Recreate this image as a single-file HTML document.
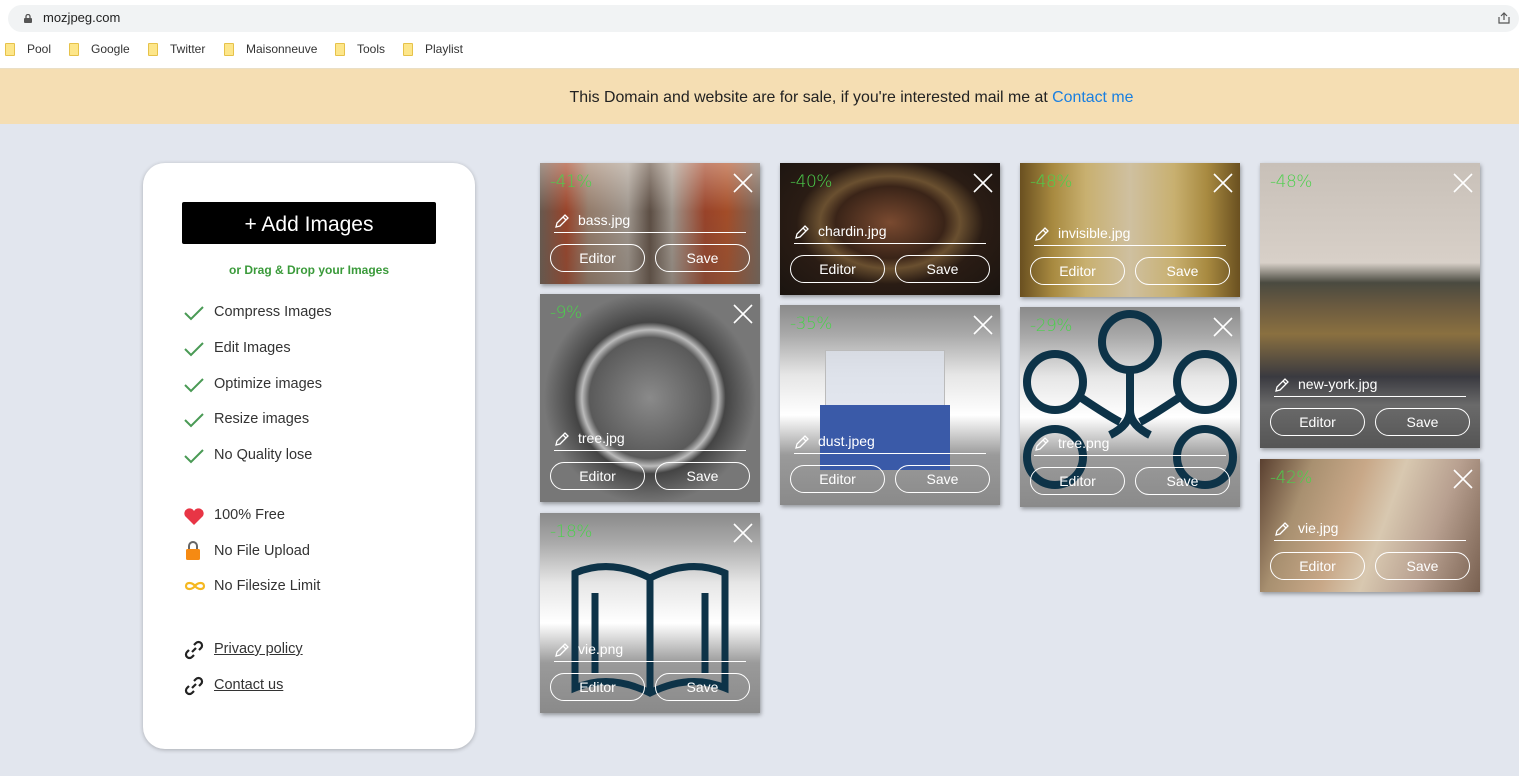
<!DOCTYPE html>
<html><head><meta charset="utf-8"><style>
*{margin:0;padding:0;box-sizing:border-box}
body{width:1519px;height:776px;overflow:hidden;background:#e2e6ee;font-family:"Liberation Sans",sans-serif;position:relative}
.top{position:absolute;left:0;top:0;width:1519px;height:68px;background:#fff}
.url{position:absolute;left:8px;top:5px;width:1511px;height:27px;background:#f1f3f4;border-radius:14px}
.url span{position:absolute;left:35px;top:5px;font-size:13px;color:#222}
.lock{position:absolute;left:16px;top:9px;width:8px;height:9px}
.bm{position:absolute;top:42px;font-size:12px;color:#333}
.bm i{position:absolute;left:-22px;top:1px;width:10px;height:13px;background:#fde68a;border:1px solid #e6c24a;border-radius:1px}
.banner{position:absolute;left:0;top:68px;width:1519px;height:56px;background:#f5deb3;text-align:center;line-height:57px;font-size:15.9px;color:#222;border-top:1px solid #eadfc6;padding-left:184px}
.banner a{color:#1a7fe0;text-decoration:none}
.panel{position:absolute;left:143px;top:163px;width:332px;height:586px;background:#fff;border-radius:22px;box-shadow:0 1px 4px rgba(0,0,0,.25)}
.add{position:absolute;left:39px;top:39px;width:254px;height:42px;background:#000;border-radius:2px;color:#fff;font-size:21px;text-align:center;line-height:45px}
.dd{position:absolute;left:0;width:332px;top:100px;text-align:center;color:#3a9a3a;font-size:12px;font-weight:bold}
.it{position:absolute;left:71px;font-size:14.5px;color:#333}
.ic{position:absolute;left:40px}
.it a{color:#333}
.card{position:absolute;width:220px;overflow:hidden;box-shadow:1px 2px 4px rgba(0,0,0,.35)}
.pct{position:absolute;left:10px;top:9px;color:#4cd04c;font-size:17px;font-family:"DejaVu Sans",sans-serif;font-weight:300;letter-spacing:-0.5px}
.x{position:absolute;right:6px;top:9px;width:22px;height:22px}
.nm{position:absolute;left:14px;right:14px;bottom:51px;height:24px;border-bottom:1px solid #fff;color:#fff;font-size:14px;padding-left:24px;line-height:22px}
.nm svg{position:absolute;left:0;top:4px}
.b{position:absolute;bottom:12px;width:95px;height:28px;border:1px solid #fff;border-radius:14px;color:#fff;font-size:14px;text-align:center;line-height:26px}
.b1{left:10px}.b2{left:115px}
.png{background:linear-gradient(#8a8a8a 0%,#aaa 15%,#e6e6e6 35%,#fff 55%,#dcdcdc 62%,#9a9a9a 75%,#8a8a8a 100%)}
</style></head><body>
<div class="top">
<div class="url"><svg class="lock" viewBox="0 0 8 9"><rect x="0" y="4" width="8" height="5" rx="1" fill="#555"/><path d="M2 4V2.5a2 2 0 0 1 4 0V4" stroke="#555" stroke-width="1.3" fill="none"/></svg><span>mozjpeg.com</span>
<svg style="position:absolute;right:8px;top:6px" width="14" height="14" viewBox="0 0 14 14"><path d="M2 6v6h10V6M7 9V2M4 5l3-3 3 3" stroke="#555" fill="none" stroke-width="1.2"/></svg></div>
<div class="bm" style="left:27px"><i></i>Pool</div>
<div class="bm" style="left:91px"><i></i>Google</div>
<div class="bm" style="left:170px"><i></i>Twitter</div>
<div class="bm" style="left:246px"><i></i>Maisonneuve</div>
<div class="bm" style="left:357px"><i></i>Tools</div>
<div class="bm" style="left:425px"><i></i>Playlist</div>
</div>
<div class="banner">This Domain and website are for sale, if you're interested mail me at <a>Contact me</a></div>

<div class="panel">
<div class="add">+ Add Images</div>
<div class="dd">or Drag &amp; Drop your Images</div>
<svg class="ic" style="top:142px" width="22" height="16" viewBox="0 0 22 16"><path d="M2 8l6 6L20 2" stroke="#4a9a55" stroke-width="2" fill="none"/></svg><div class="it" style="top:141px">Compress Images</div>
<svg class="ic" style="top:178px" width="22" height="16" viewBox="0 0 22 16"><path d="M2 8l6 6L20 2" stroke="#4a9a55" stroke-width="2" fill="none"/></svg><div class="it" style="top:177px">Edit Images</div>
<svg class="ic" style="top:214px" width="22" height="16" viewBox="0 0 22 16"><path d="M2 8l6 6L20 2" stroke="#4a9a55" stroke-width="2" fill="none"/></svg><div class="it" style="top:213px">Optimize images</div>
<svg class="ic" style="top:249px" width="22" height="16" viewBox="0 0 22 16"><path d="M2 8l6 6L20 2" stroke="#4a9a55" stroke-width="2" fill="none"/></svg><div class="it" style="top:248px">Resize images</div>
<svg class="ic" style="top:285px" width="22" height="16" viewBox="0 0 22 16"><path d="M2 8l6 6L20 2" stroke="#4a9a55" stroke-width="2" fill="none"/></svg><div class="it" style="top:284px">No Quality lose</div>
<svg class="ic" style="top:345px" width="22" height="18" viewBox="0 0 22 18"><path d="M11 17L2 8a4.5 4.5 0 0 1 9-5 4.5 4.5 0 0 1 9 5z" fill="#e83545"/></svg><div class="it" style="top:344px">100% Free</div>
<svg class="ic" style="top:377px" width="20" height="21" viewBox="0 0 20 21"><path d="M6 9V6a4 4 0 0 1 8 0v3" stroke="#666" stroke-width="2" fill="none"/><rect x="3" y="9" width="14" height="11" rx="1.5" fill="#f68a12"/></svg><div class="it" style="top:380px">No File Upload</div>
<svg class="ic" style="top:417px" width="24" height="12" viewBox="0 0 24 12"><path d="M12 6c-3-4-9-4-9 0s6 4 9 0 9-4 9 0-6 4-9 0" stroke="#f5b820" stroke-width="2.2" fill="none"/></svg><div class="it" style="top:415px">No Filesize Limit</div>
<svg class="ic" style="top:476px" width="22" height="22" viewBox="0 0 22 22"><g stroke="#222" stroke-width="2.2" fill="none"><path d="M9 13l4-4"/><path d="M11 6l2-2a3 3 0 0 1 5 5l-2 2"/><path d="M11 16l-2 2a3 3 0 0 1-5-5l2-2"/></g></svg><div class="it" style="top:478px"><a style="text-decoration:underline">Privacy policy</a></div>
<svg class="ic" style="top:512px" width="22" height="22" viewBox="0 0 22 22"><g stroke="#222" stroke-width="2.2" fill="none"><path d="M9 13l4-4"/><path d="M11 6l2-2a3 3 0 0 1 5 5l-2 2"/><path d="M11 16l-2 2a3 3 0 0 1-5-5l2-2"/></g></svg><div class="it" style="top:514px"><a style="text-decoration:underline">Contact us</a></div>
</div>

<div class="card" style="left:540px;top:163px;height:121px;background:linear-gradient(90deg,#7a6a60 0%,#c04a2a 12%,#b89a86 22%,#c8c0b8 40%,#6a5a50 50%,#c8c0b8 60%,#c04a2a 75%,#d05828 85%,#8a7a70 100%)"><div style="position:absolute;inset:0;background:linear-gradient(rgba(200,190,180,.5),rgba(60,50,40,.3) 40%,rgba(80,70,60,.5))"></div></div>
<div class="card" style="left:540px;top:294px;height:208px;background:radial-gradient(circle at 50% 50%,#8a8a8a 0%,#5a5a5a 40%,#bbb 45%,#444 50%,#777 70%)"></div>
<div class="card png" style="left:540px;top:513px;height:200px"><svg style="position:absolute;left:25px;top:40px" width="170" height="150" viewBox="0 0 170 150"><g stroke="#0d3348" stroke-width="7" fill="none"><path d="M10 20q35-15 75 5q40-20 75-5v115q-35-15-75 5q-40-20-75-5z"/><path d="M85 25v115M30 40v80M140 40v80"/></g></svg></div>
<div class="card" style="left:780px;top:163px;height:132px;background:radial-gradient(ellipse at 50% 45%,#7a4a30 0%,#3a2418 35%,#6a5030 45%,#2a1c14 60%,#1a1410 100%)"></div>
<div class="card png" style="left:780px;top:305px;height:200px"><div style="position:absolute;left:45px;top:45px;width:120px;height:60px;background:rgba(220,225,235,.8);border:1px solid #bbb"></div><div style="position:absolute;left:40px;top:100px;width:130px;height:65px;background:#3a5aa8"></div></div>
<div class="card" style="left:1020px;top:163px;height:134px;background:linear-gradient(90deg,#6a5020,#a88a40 15%,#c8b070 30%,#cfc0a0 50%,#c8b070 70%,#a88a40 85%,#6a5020)"></div>
<div class="card png" style="left:1020px;top:307px;height:200px"><svg style="position:absolute;left:0;top:0" width="220" height="200" viewBox="0 0 220 200"><g stroke="#0d3348" stroke-width="8" fill="none"><circle cx="110" cy="35" r="28"/><circle cx="35" cy="75" r="28"/><circle cx="185" cy="75" r="28"/><circle cx="35" cy="150" r="28"/><circle cx="185" cy="150" r="28"/><path d="M110 63v40q0 15-20 25M110 103q0 15 20 25M60 90q30 20 40 25M160 90q-30 20-40 25"/></g></svg></div>
<div class="card" style="left:1260px;top:163px;height:285px;background:linear-gradient(#c8c0b8 0%,#d8d0c8 35%,#4a4a40 42%,#6a5a40 50%,#8a7040 60%,#3a3a40 75%,#6a6a6a 85%,#555 100%)"></div>
<div class="card" style="left:1260px;top:459px;height:133px;background:linear-gradient(110deg,#5a4030 0%,#a89070 20%,#c8a888 40%,#d8c8b0 55%,#b8a090 75%,#786050 100%)"></div>

<script>
const cards=[[540,163,121,"-41%","bass.jpg"],[540,294,208,"-9%","tree.jpg"],[540,513,200,"-18%","vie.png"],[780,163,132,"-40%","chardin.jpg"],[780,305,200,"-35%","dust.jpeg"],[1020,163,134,"-48%","invisible.jpg"],[1020,307,200,"-29%","tree.png"],[1260,163,285,"-48%","new-york.jpg"],[1260,459,133,"-42%","vie.jpg"]];
const els=document.querySelectorAll('.card');
els.forEach((c,i)=>{const d=cards[i];c.insertAdjacentHTML('beforeend',`<div class="pct">${d[3]}</div><svg class="x" viewBox="0 0 22 22"><path d="M2 2L20 20M20 2L2 20" stroke="#fff" stroke-width="1.6"/></svg><div class="nm"><svg width="16" height="16" viewBox="0 0 16 16"><path d="M2 14l1-4 8-8 3 3-8 8zM9 4l3 3" stroke="#fff" stroke-width="1.3" fill="none"/></svg>${d[4]}</div><div class="b b1">Editor</div><div class="b b2">Save</div>`)});
</script>
</body></html>
